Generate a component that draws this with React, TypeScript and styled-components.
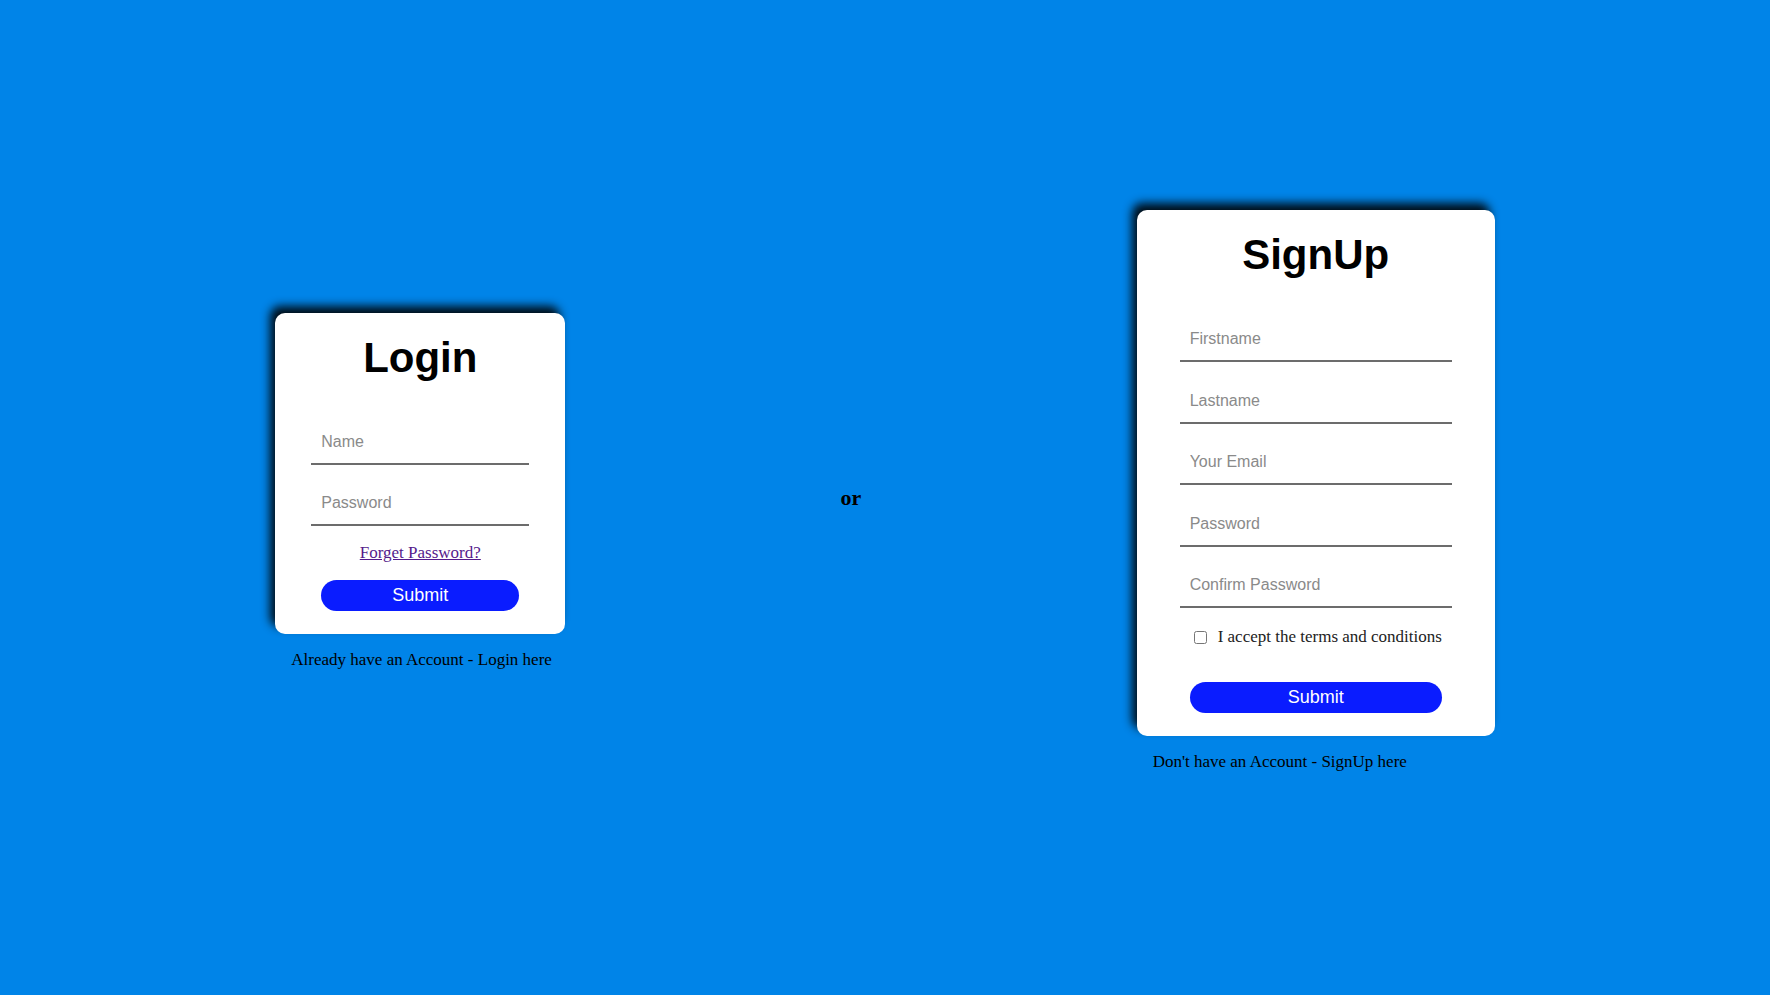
import React from "react";
import styled, { createGlobalStyle } from "styled-components";

const GlobalStyle = createGlobalStyle`
  html, body {
    margin: 0;
    padding: 0;
    background: #0084e8;
  }
  * { box-sizing: border-box; }
`;

const Page = styled.main`
  height: 100vh;
  display: flex;
  justify-content: space-evenly;
  align-items: center;
  background: #0084e8;
  font-family: "Liberation Serif", "Times New Roman", serif;
`;

const Column = styled.section`
  display: flex;
  flex-direction: column;
`;

const Card = styled.div<{ $width: number; $padX: number }>`
  width: ${(p) => p.$width}px;
  background: #ffffff;
  border-radius: 10px;
  box-shadow: -5px -7px 10px rgba(0, 0, 0, 0.9);
  padding: 22px ${(p) => p.$padX}px 23px;
  display: flex;
  flex-direction: column;
  align-items: stretch;
`;

const Title = styled.h1`
  margin: 0 0 44px;
  font-family: "Liberation Sans", Arial, sans-serif;
  font-weight: 700;
  font-size: 42px;
  line-height: 46px;
  text-align: center;
  color: #000;
`;

const Fields = styled.div<{ $gap: number }>`
  display: flex;
  flex-direction: column;
  gap: ${(p) => p.$gap}px;
`;

const Input = styled.input`
  display: block;
  width: 100%;
  height: 40px;
  padding: 8px 10px 12px;
  border: none;
  border-bottom: 2px solid #6c6c6c;
  outline: none;
  background: transparent;
  font-family: "Liberation Sans", Arial, sans-serif;
  font-size: 16px;
  line-height: 18px;
  color: #222;
  &::placeholder {
    color: #8a8a8a;
  }
`;

const ForgetLink = styled.a`
  display: block;
  margin-top: 17px;
  text-align: center;
  font-family: "Liberation Serif", "Times New Roman", serif;
  font-size: 17px;
  color: #551a8b;
  text-decoration: underline;
`;

const SubmitButton = styled.button<{ $width: number; $top: number }>`
  align-self: center;
  width: ${(p) => p.$width}px;
  height: 31px;
  margin-top: ${(p) => p.$top}px;
  border: none;
  border-radius: 16px;
  background: #0a1cff;
  color: #ffffff;
  font-family: "Liberation Sans", Arial, sans-serif;
  font-size: 18px;
  cursor: pointer;
`;

const CheckRow = styled.label`
  display: flex;
  align-items: center;
  margin-top: 19px;
  padding-left: 8px;
  font-family: "Liberation Serif", "Times New Roman", serif;
  font-size: 17px;
  color: #222;
`;

const Checkbox = styled.input`
  width: 13px;
  height: 13px;
  margin: 3px 11px 3px 6px;
`;

const Note = styled.p`
  margin: 16px 0 13px;
  padding-left: 16px;
  font-family: "Liberation Serif", "Times New Roman", serif;
  font-size: 17px;
  color: #000;
`;

const Or = styled.h3`
  margin: 0;
  font-family: "Liberation Serif", "Times New Roman", serif;
  font-weight: 700;
  font-size: 22px;
  color: #000;
`;

export default function App() {
  return (
    <>
      <GlobalStyle />
      <Page>
        <Column>
          <Card $width={290} $padX={36}>
            <Title>Login</Title>
            <Fields $gap={21}>
              <Input type="text" placeholder="Name" />
              <Input type="password" placeholder="Password" />
            </Fields>
            <ForgetLink href="#">Forget Password?</ForgetLink>
            <SubmitButton $width={198} $top={17}>Submit</SubmitButton>
          </Card>
          <Note>Already have an Account - Login here</Note>
        </Column>

        <Or>or</Or>

        <Column>
          <Card $width={358} $padX={43}>
            <Title>SignUp</Title>
            <Fields $gap={21.5}>
              <Input type="text" placeholder="Firstname" />
              <Input type="text" placeholder="Lastname" />
              <Input type="email" placeholder="Your Email" />
              <Input type="password" placeholder="Password" />
              <Input type="password" placeholder="Confirm Password" />
            </Fields>
            <CheckRow>
              <Checkbox type="checkbox" />
              I accept the terms and conditions
            </CheckRow>
            <SubmitButton $width={252} $top={35}>Submit</SubmitButton>
          </Card>
          <Note>Don't have an Account - SignUp here</Note>
        </Column>
      </Page>
    </>
  );
}
